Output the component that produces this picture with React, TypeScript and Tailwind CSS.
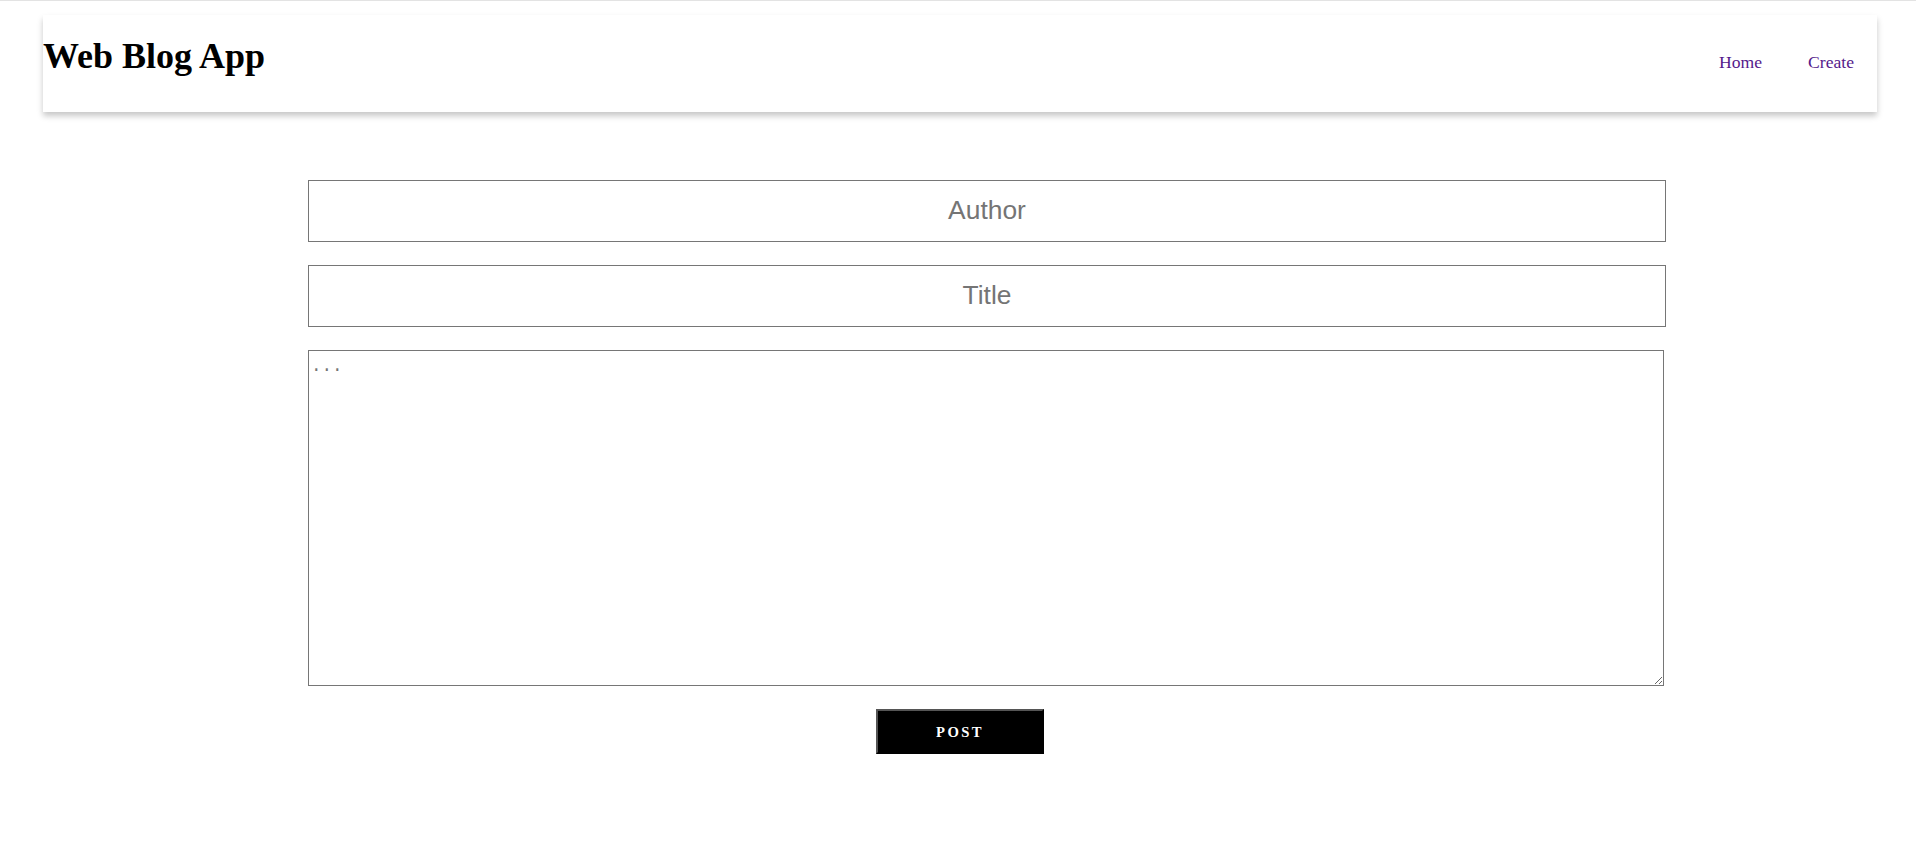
import React from "react";

export default function App() {
  return (
    <div className="min-h-[865px] w-full bg-white border-t border-[#e3e3e3]">
      <header className="ml-[43px] mt-[14px] flex h-[97px] w-[1834px] items-baseline justify-between bg-white pt-[21px] shadow-[0_4px_6px_rgba(0,0,0,0.22)]">
        <h1 className="m-0 font-['Liberation_Serif',serif] text-[36px] font-bold leading-[40px] text-black">
          Web Blog App
        </h1>
        <nav className="flex gap-[46px] pr-[23px] font-['Liberation_Serif',serif] text-[17.6px] leading-[20px]">
          <a href="#" className="text-[#551a8b]">Home</a>
          <a href="#" className="text-[#551a8b]">Create</a>
        </nav>
      </header>

      <form
        className="ml-[308px] mt-[68px] flex w-[1358px] flex-col gap-[23px]"
        onSubmit={(e) => e.preventDefault()}
      >
        <input
          type="text"
          placeholder="Author"
          className="box-border h-[62px] w-[1358px] border border-[#767676] bg-white pb-[2px] text-center font-['Liberation_Sans',Arial,sans-serif] text-[26.4px] text-black outline-none placeholder:text-[#757575]"
        />
        <input
          type="text"
          placeholder="Title"
          className="box-border h-[62px] w-[1358px] border border-[#767676] bg-white pb-[2px] text-center font-['Liberation_Sans',Arial,sans-serif] text-[26.4px] text-black outline-none placeholder:text-[#757575]"
        />
        <textarea
          placeholder="..."
          className="box-border h-[336px] w-[1356px] resize border border-[#767676] bg-white p-[2px] font-['Liberation_Mono',monospace] text-[17.6px] text-black outline-none placeholder:text-[#757575]"
        />
        <button
          type="submit"
          className="ml-[568px] box-border h-[45px] w-[168px] self-start border-2 border-t-[#555555] border-l-[#555555] border-r-black border-b-black bg-black font-['Liberation_Serif',serif] text-[14.67px] font-bold tracking-[2.4px] text-white"
        >
          POST
        </button>
      </form>
    </div>
  );
}
